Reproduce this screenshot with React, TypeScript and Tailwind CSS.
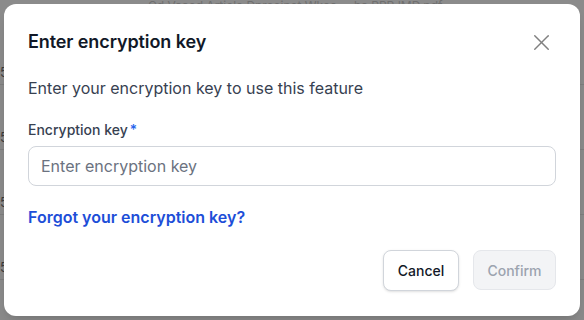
import React, { useState } from 'react';
import { X } from 'lucide-react';

const rows = [72, 137, 202, 267];

export default function App() {
    const [key, setKey] = useState('');

    return (
        <div className="relative w-[584px] h-[320px] overflow-hidden bg-[#8b8b8b] font-['Inter',sans-serif]">
            {/* dimmed page behind the dialog */}
            <div className="absolute inset-0">
                <div className="absolute left-[148px] top-0 text-[12px] leading-none text-[#6f6f6f] whitespace-nowrap">
                    Cd Vaaed Artiele Dnreeinet Wkee ... ha PPP IMD.pdf
                </div>
                {rows.map((top) => (
                    <div key={top}>
                        <div className="absolute left-0 text-[13px] text-[#3a3a3a]" style={{ top: top - 9 }}>5</div>
                        <div className="absolute left-0 right-0 h-px bg-[#7e7e7e]" style={{ top: top + 12 }} />
                    </div>
                ))}
            </div>

            {/* dialog */}
            <div className="absolute left-[4px] top-[4px] w-[576px] h-[312px] rounded-[12px] bg-white shadow-lg flex flex-col px-6 pt-6 pb-[25px]">
                <div className="flex items-center justify-between h-7">
                    <h2 className="text-[18px] leading-7 font-semibold text-[#111827] tracking-[-0.1px]">Enter encryption key</h2>
                    <button className="text-[#808080] mr-[1px]">
                        <X className="h-[27px] w-[27px]" strokeWidth={1.3} />
                    </button>
                </div>

                <p className="mt-5 text-[16px] leading-6 text-[#374151]">
                    Enter your encryption key to use this feature
                </p>

                <label className="mt-5 text-[14px] leading-5 font-medium text-[#374151]">
                    Encryption key<span className="ml-[2px] text-[#2563eb]">*</span>
                </label>
                <input
                    value={key}
                    onChange={(e) => setKey(e.target.value)}
                    placeholder="Enter encryption key"
                    className="mt-[6px] h-10 w-full rounded-lg border border-[#d1d5db] px-3 text-[16px] text-[#111827] placeholder:text-[#6b7280] outline-none"
                />

                <a href="#" className="mt-[19px] text-[16px] leading-6 font-semibold text-[#1d4ed8] self-start">
                    Forgot your encryption key?
                </a>

                <div className="mt-auto flex justify-end gap-[14px]">
                    <button className="h-[41px] w-[76px] rounded-lg border border-[#d1d5db] bg-white text-[14px] font-medium text-[#111827] shadow-sm">
                        Cancel
                    </button>
                    <button disabled className="h-[40px] w-[83px] rounded-lg border border-[#e5e7eb] bg-[#f3f4f6] text-[14px] font-medium text-[#9ca3af]">
                        Confirm
                    </button>
                </div>
            </div>
        </div>
    );
}
